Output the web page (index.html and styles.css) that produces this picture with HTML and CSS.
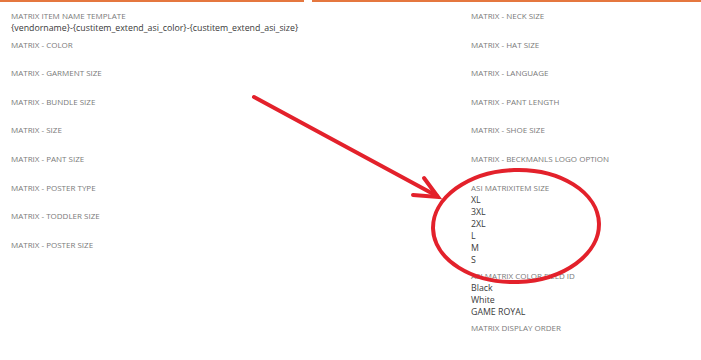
FILE: index.html
```html
<!DOCTYPE html>
<html lang="en">
<head>
  <meta charset="UTF-8" />
  <title>Matrix Fields</title>
  <link rel="stylesheet" href="styles.css">
</head>
<body>
  <div class="tabs">
    <div class="tab-bar left"></div>
    <div class="tab-bar right"></div>
  </div>

  <div class="fields">
    <div class="column">
      <div class="field">
        <div class="label">Matrix Item Name Template</div>
        <div class="value">{vendorname}-{custitem_extend_asi_color}-{custitem_extend_asi_size}</div>
      </div>
      <div class="field"><div class="label">Matrix - Color</div><div class="value"></div></div>
      <div class="field"><div class="label">Matrix - Garment Size</div><div class="value"></div></div>
      <div class="field"><div class="label">Matrix - Bundle Size</div><div class="value"></div></div>
      <div class="field"><div class="label">Matrix - Size</div><div class="value"></div></div>
      <div class="field"><div class="label">Matrix - Pant Size</div><div class="value"></div></div>
      <div class="field"><div class="label">Matrix - Poster Type</div><div class="value"></div></div>
      <div class="field"><div class="label">Matrix - Toddler Size</div><div class="value"></div></div>
      <div class="field"><div class="label">Matrix - Poster Size</div><div class="value"></div></div>
    </div>

    <div class="column">
      <div class="field"><div class="label">Matrix - Neck Size</div><div class="value"></div></div>
      <div class="field"><div class="label">Matrix - Hat Size</div><div class="value"></div></div>
      <div class="field"><div class="label">Matrix - Language</div><div class="value"></div></div>
      <div class="field"><div class="label">Matrix - Pant Length</div><div class="value"></div></div>
      <div class="field"><div class="label">Matrix - Shoe Size</div><div class="value"></div></div>
      <div class="field"><div class="label">Matrix - Beckmanls Logo Option</div><div class="value"></div></div>
      <div class="field">
        <div class="label">ASI Matrixitem Size</div>
        <div class="value">XL<br>3XL<br>2XL<br>L<br>M<br>S</div>
      </div>
      <div class="field">
        <div class="label">ASI Matrix Color Field ID</div>
        <div class="value">Black<br>White<br>GAME ROYAL</div>
      </div>
      <div class="field"><div class="label">Matrix Display Order</div><div class="value"></div></div>
    </div>
  </div>

  <!-- hand drawn markup on top of the screenshot -->
  <svg class="markup" viewBox="0 0 701 360" xmlns="http://www.w3.org/2000/svg">
    <g fill="none" stroke="#e3212b" stroke-width="4" stroke-linecap="round">
      <path d="M 254 97 L 437 196" />
      <path d="M 424 178 L 438 197 L 413 195" />
      <ellipse cx="516" cy="226" rx="83" ry="56" transform="rotate(-2 516 226)" />
    </g>
  </svg>
</body>
</html>
```

FILE: styles.css
```css
body {
  margin: 0;
  background-color: #ffffff;
  font-family: "Open Sans", "Liberation Sans", sans-serif;
  color: #444;
  position: relative;
  width: 701px;
  height: 360px;
  overflow: hidden;
}

.tabs {
  display: flex;
  gap: 8px;
}

.tab-bar {
  height: 2px;
  background-color: #e5773f;
}

.tab-bar.left {
  width: 304px;
}

.tab-bar.right {
  flex: 1;
}

.fields {
  display: grid;
  grid-template-columns: 460px 1fr;
  padding: 8px 0 0 11px;
}

.field {
  margin-bottom: 4px;
}

.label {
  font-size: 8px;
  line-height: 12px;
  text-transform: uppercase;
  color: #7a7a7a;
}

.value {
  font-size: 8.8px;
  line-height: 12px;
  min-height: 12.6px;
  color: #3a3a3a;
}

.markup {
  position: absolute;
  left: 0;
  top: 0;
  width: 701px;
  height: 360px;
  pointer-events: none;
}
```
